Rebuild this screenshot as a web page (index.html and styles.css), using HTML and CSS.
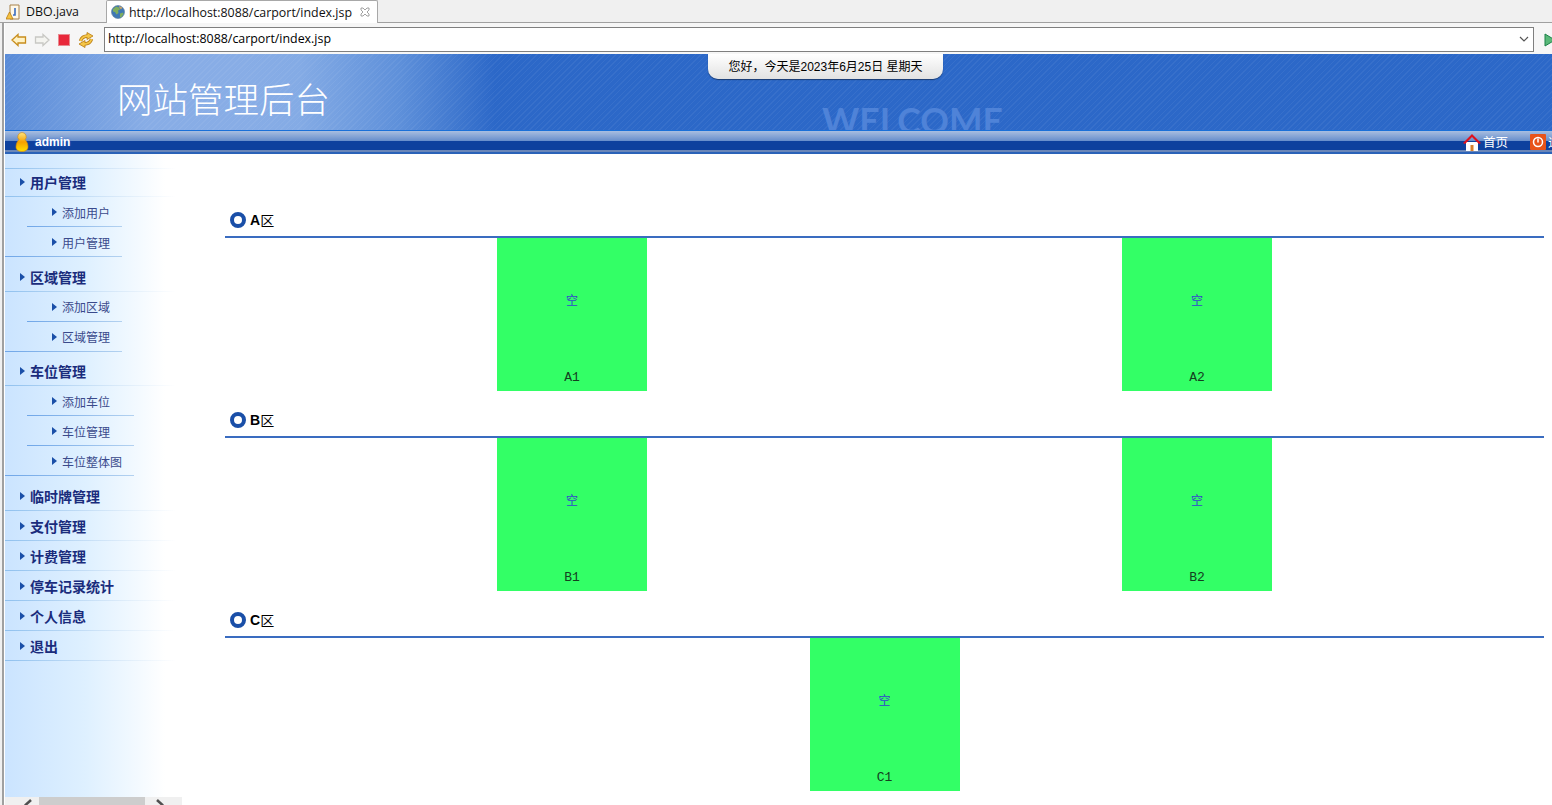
FILE: index.html
```html
<!DOCTYPE html>
<html>
<head>
  <meta charset="utf-8">
  <title>网站管理后台</title>
  <link rel="stylesheet" href="styles.css">
</head>
<body>
  <div class="tabbar">
    <div class="tab">
      <svg class="tab-icon" width="16" height="16" viewBox="0 0 16 16">
        <path d="M4 1h9v14H4z" fill="#fff8e8" stroke="#a8824a"/>
        <path d="M9 4v7H7" fill="none" stroke="#3a6cc0" stroke-width="1.6"/>
        <path d="M3.500 8L7 15H0z" fill="#f6c343" stroke="#b87a10" stroke-width=".8"/>
      </svg>
      <span>DBO.java</span>
    </div>
    <div class="tab active">
      <svg class="tab-icon" width="14" height="14" viewBox="0 0 14 14">
        <circle cx="7" cy="7" r="6.500" fill="#3f78b4" stroke="#5a7a98" stroke-width=".6"/>
        <path d="M2 4l3-2.500 3 1 1 2-2 1 .5 2.500-2 1.500-1.500-2.500L2 6.500zM9 8.500l3-1 .5 1.500-2 3-1.500.5z" fill="#7fae5e"/>
        <path d="M8 1l3.500 1.500L10 4.500 8.500 3z" fill="#c8a468"/>
      </svg>
      <span>http://localhost:8088/carport/index.jsp</span>
      <svg class="tab-close" width="10" height="10" viewBox="0 0 10 10">
        <path d="M1 1h2l2 2 2-2h2v2L7 5l2 2v2H7L5 7 3 9H1V7l2-2-2-2z" fill="#fff" stroke="#8a8a8a" stroke-width=".8"/>
      </svg>
    </div>
  </div>

  <div class="frame">
    <div class="toolbar">
      <svg class="tool" width="16" height="14" viewBox="0 0 16 14">
        <path d="M1 7l6-5.500V4h7.500v6H7v2.500z" fill="#fff2c4" stroke="#c88d1c" stroke-width="1.300"/>
      </svg>
      <svg class="tool" width="16" height="14" viewBox="0 0 16 14">
        <path d="M15 7L9 1.500V4H1.500v6H9v2.500z" fill="#f4f4f0" stroke="#c8c8c4" stroke-width="1.300"/>
      </svg>
      <svg class="tool" width="14" height="14" viewBox="0 0 14 14">
        <rect x="1.500" y="1.500" width="11" height="11" fill="#e8283a" stroke="#e88a90"/>
      </svg>
      <svg class="tool" width="16" height="16" viewBox="0 0 16 16">
        <path d="M2.500 9C3.500 5.500 6.500 4 10 4M13.500 7C12.500 10.500 9.500 12 6 12" fill="none" stroke="#b87a10" stroke-width="3.400"/>
        <path d="M9 .5L15 4 9 7.500zM7 8.500L1 12l6 3.500z" fill="#f4c648" stroke="#b87a10" stroke-width=".8"/>
        <path d="M2.500 9C3.500 5.500 6.500 4 10 4M13.500 7C12.500 10.500 9.500 12 6 12" fill="none" stroke="#f4c648" stroke-width="1.800"/>
      </svg>
      <div class="address">
        <span>http://localhost:8088/carport/index.jsp</span>
        <svg width="10" height="6" viewBox="0 0 10 6"><path d="M1 1l4 4 4-4" fill="none" stroke="#555" stroke-width="1.200"/></svg>
      </div>
      <svg class="go" width="12" height="14" viewBox="0 0 12 14">
        <path d="M1 1l10 6-10 6z" fill="#58b878" stroke="#1c8048"/>
      </svg>
    </div>

    <div class="banner">
      <div class="banner-title">网站管理后台</div>
      <div class="date-tab">您好，今天是2023年6月25日 星期天</div>
      <div class="welcome">WELCOME</div>
    </div>

    <div class="navbar">
      <svg class="nav-user" width="14" height="20" viewBox="0 0 14 20">
        <defs>
          <linearGradient id="userFill" x1="0" y1="0" x2="0" y2="1">
            <stop offset="0" stop-color="#ffe680"/>
            <stop offset=".5" stop-color="#f5a000"/>
            <stop offset="1" stop-color="#ffe000"/>
          </linearGradient>
        </defs>
        <path d="M7 .5a4.300 4.300 0 0 1 3 7.300c2 1.500 3 4.500 3 7.200 0 2.800-2.500 4.500-6 4.500s-6-1.700-6-4.500c0-2.700 1-5.700 3-7.200A4.300 4.300 0 0 1 7 .5z" fill="url(#userFill)" stroke="#d88a00" stroke-width=".6"/>
      </svg>
      <span class="nav-name">admin</span>
      <div class="nav-links">
        <svg width="18" height="18" viewBox="0 0 18 18">
          <path d="M3 9h12v9H3z" fill="#fff"/>
          <path d="M7.500 12h3v6h-3z" fill="#d8802c"/>
          <path d="M0 10L9 1l9 9-2 1-7-7-7 7z" fill="#e0101c"/>
        </svg>
        <span class="nav-link">首页</span>
        <svg class="nav-power" width="16" height="16" viewBox="0 0 16 16">
          <rect width="16" height="16" rx="1" fill="#e8541a"/>
          <circle cx="8" cy="8" r="4.500" fill="none" stroke="#fff" stroke-width="1.500"/>
          <path d="M8 4.500v4" stroke="#fff" stroke-width="1.500"/>
        </svg>
        <span class="nav-link">退出</span>
      </div>
    </div>

    <div class="layout">
      <div class="sidebar">
        <div class="menu">
          <div class="menu-head first">用户管理</div>
          <div class="sub-list">
            <div class="sub-item inset">添加用户</div>
            <div class="sub-item">用户管理</div>
          </div>
          <div class="menu-head">区域管理</div>
          <div class="sub-list tight">
            <div class="sub-item inset">添加区域</div>
            <div class="sub-item">区域管理</div>
          </div>
          <div class="menu-head">车位管理</div>
          <div class="sub-list wide">
            <div class="sub-item inset">添加车位</div>
            <div class="sub-item inset">车位管理</div>
            <div class="sub-item">车位整体图</div>
          </div>
          <div class="menu-head">临时牌管理</div>
          <div class="menu-head">支付管理</div>
          <div class="menu-head">计费管理</div>
          <div class="menu-head">停车记录统计</div>
          <div class="menu-head">个人信息</div>
          <div class="menu-head">退出</div>
        </div>
        <div class="h-scroll">
          <svg width="12" height="8" viewBox="0 0 12 8"><path d="M9 3L3 8.500" fill="none" stroke="#505050" stroke-width="2.500"/></svg>
          <div class="h-thumb"></div>
          <svg width="12" height="8" viewBox="0 0 12 8"><path d="M2 3l6 5.500" fill="none" stroke="#505050" stroke-width="2.500"/></svg>
        </div>
      </div>

      <div class="main">
        <div class="area">
          <div class="area-head"><i class="ring"></i><b>A</b>区</div>
          <div class="spots">
            <div class="spot"><span class="spot-state">空</span><span class="spot-name">A1</span></div>
            <div class="spot"><span class="spot-state">空</span><span class="spot-name">A2</span></div>
          </div>
        </div>
        <div class="area">
          <div class="area-head"><i class="ring"></i><b>B</b>区</div>
          <div class="spots">
            <div class="spot"><span class="spot-state">空</span><span class="spot-name">B1</span></div>
            <div class="spot"><span class="spot-state">空</span><span class="spot-name">B2</span></div>
          </div>
        </div>
        <div class="area">
          <div class="area-head"><i class="ring"></i><b>C</b>区</div>
          <div class="spots single">
            <div class="spot"><span class="spot-state">空</span><span class="spot-name">C1</span></div>
          </div>
        </div>
      </div>
    </div>
  </div>
</body>
</html>
```

FILE: styles.css
```css
* {
  margin: 0;
  padding: 0;
  box-sizing: border-box;
}

html, body {
  height: 805px;
  overflow: hidden;
}

body {
  background-color: #f0f0f0;
  font-family: "Liberation Sans", "Noto Sans CJK SC", sans-serif;
  color: #000;
}

/* eclipse tabs */
.tabbar {
  display: flex;
  height: 23px;
  border-bottom: 1px solid #a0a0a0;
  font-family: "Open Sans", "Liberation Sans", sans-serif;
  font-size: 12.400px;
}

.tab {
  display: flex;
  align-items: center;
  width: 106px;
  height: 23px;
  padding-left: 6px;
  gap: 4px;
  color: #111;
}

.tab.active {
  width: 272px;
  padding-left: 4px;
  gap: 4px;
  background-color: #fff;
  border: 1px solid #a8a8a8;
  border-bottom: none;
  border-radius: 2px 2px 0 0;
}

.tab-close {
  margin-left: 4px;
}

.frame {
  display: flex;
  flex-direction: column;
  height: 782px;
  margin-left: 2px;
  padding-left: 1px;
  border-left: 2px solid #a0a0a0;
  background-color: #fff;
}

.toolbar {
  display: flex;
  align-items: center;
  flex: none;
  height: 31px;
  padding: 2px 0 0 6px;
  background-color: #f6f6f6;
  overflow: hidden;
}

.tool {
  flex: none;
  margin-right: 7px;
}

.address {
  display: flex;
  align-items: center;
  justify-content: space-between;
  flex: none;
  width: 1430px;
  height: 25px;
  margin-left: 3px;
  padding: 0 4px 2px 3px;
  background-color: #fff;
  border: 1px solid #7f7f7f;
  font-family: "Open Sans", "Liberation Sans", sans-serif;
  font-size: 12.400px;
}

.go {
  flex: none;
  margin-left: 10px;
}

/* header */
.banner {
  position: relative;
  flex: none;
  height: 76px;
  padding: 21px 0 0 112px;
  overflow: hidden;
  background-color: #2c68c8;
  background-image:
    repeating-linear-gradient(135deg, rgba(255, 255, 255, .05) 0 1px, transparent 1px 4px),
    linear-gradient(90deg, #5a8cd8 0, #88ade6 140px, #88ade6 240px, #84abe5 295px, #5e90da 395px, #2c68c8 490px);
}

.banner-title {
  font-family: "Noto Sans CJK SC", sans-serif;
  font-weight: 300;
  font-size: 35.500px;
  line-height: 46px;
  color: #fff;
}

.date-tab {
  position: absolute;
  top: 0;
  left: 703px;
  width: 235px;
  height: 25px;
  background: linear-gradient(180deg, #fff 0, #e2e2e2 100%);
  border-radius: 0 0 10px 10px;
  box-shadow: 0 1px 1px #1c3c70;
  font-size: 12px;
  line-height: 26px;
  text-align: center;
}

.welcome {
  position: absolute;
  top: 44px;
  left: 817px;
  font-family: "Lato", sans-serif;
  font-weight: 700;
  font-size: 35.500px;
  line-height: 46px;
  color: #4f83d8;
}

.navbar {
  display: flex;
  align-items: center;
  flex: none;
  height: 24px;
  padding: 0 0 2px 10px;
  overflow: hidden;
  color: #fff;
  border-top: 1px solid #1a70d8;
  background: linear-gradient(180deg, #a8bee0 0, #6a90cc 9.500px, #0e419e 10px, #0e419e 19px, #6a86b8 19px, #6a86b8 21px, #2a62b8 21px);
}

.nav-name {
  margin-left: 6px;
  font-size: 12px;
  font-weight: 700;
  text-shadow: 0 0 2px #3a6cd0;
}

.nav-links {
  display: flex;
  align-items: center;
  margin-left: auto;
  margin-right: -21px;
}

.nav-link {
  margin-left: 2px;
  font-family: "Noto Sans CJK SC", sans-serif;
  font-size: 12.500px;
}

.nav-power {
  margin-left: 22px;
}

/* body */
.layout {
  display: flex;
  flex: 1;
  min-height: 0;
}

.sidebar {
  display: flex;
  flex-direction: column;
  flex: none;
  width: 177px;
  padding-top: 14px;
  background: linear-gradient(90deg, #cbe4ff 0, #def0ff 80px, #f2f9ff 130px, #fff 160px);
}

.menu {
  flex: 1;
  border-top: 1px solid;
  border-image: linear-gradient(90deg, #8fc0ee, #fff 170px) 1;
}

.menu-head {
  position: relative;
  height: 30px;
  padding-left: 25px;
  border-bottom: 1px solid;
  border-image: linear-gradient(90deg, #8fc0ee, #fff 170px) 1;
  font-family: "Noto Sans CJK SC", sans-serif;
  font-size: 14px;
  font-weight: 700;
  line-height: 31px;
  color: #1a2c7c;
}

.menu-head.first {
  height: 28px;
  line-height: 27px;
}

.menu-head::before,
.sub-item::before {
  content: "";
  position: absolute;
  top: 11px;
  left: 15px;
  border-left: 5px solid #1a4fa8;
  border-top: 4px solid transparent;
  border-bottom: 4px solid transparent;
}

.menu-head.first::before {
  top: 9px;
}

.sub-list {
  width: 117px;
  margin-bottom: 5px;
}

.sub-list.tight {
  margin-bottom: 4px;
}

.sub-list.wide {
  width: 129px;
}

.sub-item {
  position: relative;
  height: 30px;
  padding-left: 57px;
  border-bottom: 1px solid;
  border-image: linear-gradient(90deg, #6fa6e8, #b4d2f0) 1;
  font-family: "Noto Sans CJK SC", sans-serif;
  font-size: 12px;
  line-height: 31px;
  color: #3a4a8c;
}

.tight .sub-item {
  line-height: 29px;
}

.sub-item.inset {
  margin-left: 22px;
  padding-left: 35px;
}

.sub-item::before {
  left: 47px;
}

.sub-item.inset::before {
  left: 25px;
}

.h-scroll {
  display: flex;
  align-items: center;
  flex: none;
  height: 8px;
  padding-left: 17px;
  background-color: #f0f0f0;
}

.h-thumb {
  width: 106px;
  height: 8px;
  margin: 0 10px 0 5px;
  background-color: #cdcdcd;
}

.main {
  flex: 1;
  min-width: 0;
  padding: 56px 8px 0 43px;
}

.area {
  height: 200px;
}

.area-head {
  display: flex;
  align-items: center;
  height: 28px;
  padding: 0 0 7px 5px;
  border-bottom: 2px solid #3a6cc0;
  font-family: "Liberation Sans", "Noto Sans CJK SC", sans-serif;
  font-size: 14px;
}

.ring {
  width: 16px;
  height: 16px;
  margin-right: 4px;
  background-color: #fff;
  border: 4.500px solid #1a4fa8;
  border-radius: 50%;
}

.spots {
  display: grid;
  grid-template-columns: 625px 625px;
  justify-content: center;
  justify-items: center;
}

.spots.single {
  grid-template-columns: 625px;
}

.spot {
  display: flex;
  flex-direction: column;
  align-items: center;
  width: 150px;
  height: 153px;
  padding-top: 54px;
  background-color: #33ff66;
}

.spot-state {
  font-family: "Noto Sans CJK SC", sans-serif;
  font-size: 12px;
  line-height: 16px;
  color: #3344cc;
}

.spot-name {
  margin-top: 62px;
  font-family: "Liberation Mono", monospace;
  font-size: 13px;
  line-height: 16px;
  color: #14401f;
}
```
